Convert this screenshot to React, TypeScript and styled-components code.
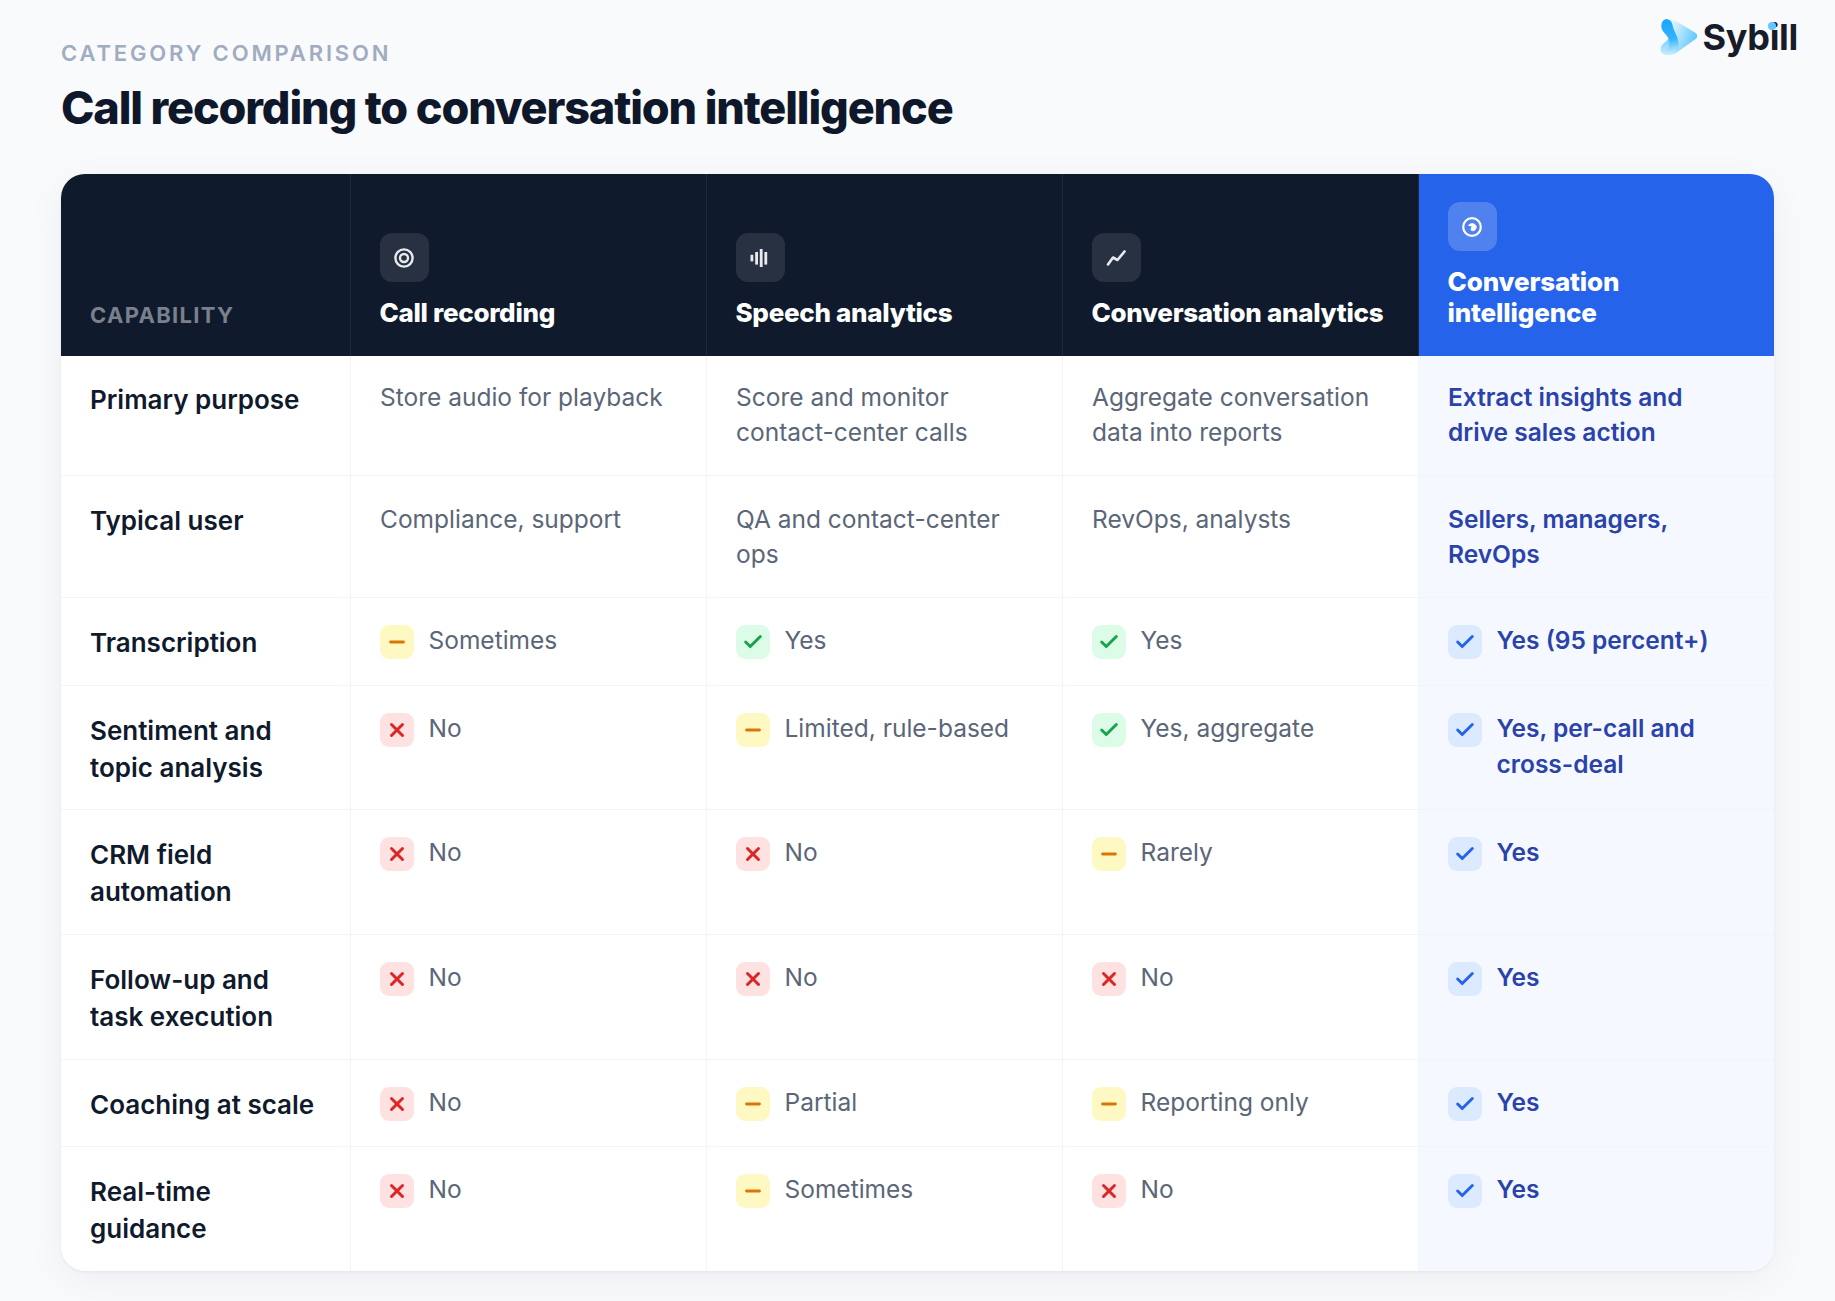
import React from 'react';
import styled, { createGlobalStyle } from 'styled-components';
import { Check, Minus, X } from 'lucide-react';

type Status = 'yes' | 'partial' | 'no' | 'best';

type Value = { status?: Status; text: string };

type Row = { label: string; labelTop: number; valueTop: number; values: Value[] };

const columns = ['Call recording', 'Speech analytics', 'Conversation analytics', 'Conversation intelligence'];

const rows: Row[] = [
  {
    label: 'Primary purpose',
    labelTop: 24.5,
    valueTop: 23.5,
    values: [
      { text: 'Store audio for playback' },
      { text: 'Score and monitor contact-center calls' },
      { text: 'Aggregate conversation data into reports' },
      { text: 'Extract insights and drive sales action' },
    ],
  },
  {
    label: 'Typical user',
    labelTop: 25.5,
    valueTop: 25.5,
    values: [
      { text: 'Compliance, support' },
      { text: 'QA and contact-center ops' },
      { text: 'RevOps, analysts' },
      { text: 'Sellers, managers, RevOps' },
    ],
  },
  {
    label: 'Transcription',
    labelTop: 25.5,
    valueTop: 25,
    values: [
      { status: 'partial', text: 'Sometimes' },
      { status: 'yes', text: 'Yes' },
      { status: 'yes', text: 'Yes' },
      { status: 'best', text: 'Yes (95 percent+)' },
    ],
  },
  {
    label: 'Sentiment and topic analysis',
    labelTop: 25.5,
    valueTop: 25,
    values: [
      { status: 'no', text: 'No' },
      { status: 'partial', text: 'Limited, rule-based' },
      { status: 'yes', text: 'Yes, aggregate' },
      { status: 'best', text: 'Yes, per-call and cross-deal' },
    ],
  },
  {
    label: 'CRM field automation',
    labelTop: 25.5,
    valueTop: 25,
    values: [
      { status: 'no', text: 'No' },
      { status: 'no', text: 'No' },
      { status: 'partial', text: 'Rarely' },
      { status: 'best', text: 'Yes' },
    ],
  },
  {
    label: 'Follow-up and task execution',
    labelTop: 25.5,
    valueTop: 25,
    values: [
      { status: 'no', text: 'No' },
      { status: 'no', text: 'No' },
      { status: 'no', text: 'No' },
      { status: 'best', text: 'Yes' },
    ],
  },
  {
    label: 'Coaching at scale',
    labelTop: 25.5,
    valueTop: 25,
    values: [
      { status: 'no', text: 'No' },
      { status: 'partial', text: 'Partial' },
      { status: 'partial', text: 'Reporting only' },
      { status: 'best', text: 'Yes' },
    ],
  },
  {
    label: 'Real-time guidance',
    labelTop: 25.5,
    valueTop: 25,
    values: [
      { status: 'no', text: 'No' },
      { status: 'partial', text: 'Sometimes' },
      { status: 'no', text: 'No' },
      { status: 'best', text: 'Yes' },
    ],
  },
];

const statusColors: Record<Status, { bg: string; fg: string }> = {
  yes: { bg: '#dcfce7', fg: '#16a34a' },
  partial: { bg: '#fef9c3', fg: '#d97706' },
  no: { bg: '#fee2e2', fg: '#dc2626' },
  best: { bg: '#dbeafe', fg: '#2563eb' },
};

const GlobalStyle = createGlobalStyle`
  html, body {
    margin: 0;
    padding: 0;
    background: #f9fafc;
  }

  body {
    font-family: Inter, "Noto Sans", sans-serif;
  }
`;

const Logo = () => (
  <LogoWrap>
    <svg width="38" height="38" viewBox="0 0 37 37" fill="none">
      <defs>
        <linearGradient id="logoBody" x1="10" y1="8" x2="36" y2="18" gradientUnits="userSpaceOnUse">
          <stop offset="0" stopColor="#e6f6ff" />
          <stop offset="1" stopColor="#62c7ff" />
        </linearGradient>
        <linearGradient id="logoLobe" x1="6" y1="22" x2="4" y2="36" gradientUnits="userSpaceOnUse">
          <stop offset="0" stopColor="#7fd2ff" />
          <stop offset="1" stopColor="#c9ecff" />
        </linearGradient>
        <linearGradient id="logoRibbon" x1="8" y1="1" x2="12" y2="36" gradientUnits="userSpaceOnUse">
          <stop offset="0" stopColor="#16a5fb" />
          <stop offset="0.55" stopColor="#34b3fd" />
          <stop offset="1" stopColor="#d5f0ff" />
        </linearGradient>
      </defs>
      <path d="M6 1 C10 0 13 2 17 4 L34 14 C37 16 37 19 34 21 L17 33 C12 36 8 36 6 36 L12 8 Z" fill="url(#logoBody)" />
      <path d="M8 20 C7 23 2 25 1 28 C0 31 1 34 3 35 C5 36 7 36 9 36 L12 26 Z" fill="url(#logoLobe)" />
      <path
        d="M6 1 C1 2 0 9 3 13 C6 17 9 19 9 24 C9 28 8 32 6 36 C12 36 17 33 18 28 C19 22 15 15 13 10 C12 6 12 2 6 1 Z"
        fill="url(#logoRibbon)"
      />
    </svg>
    <LogoWord>
      Sybill
      <LogoDot />
    </LogoWord>
  </LogoWrap>
);

const TargetIcon = () => (
  <svg width="24" height="24" viewBox="0 0 24 24" fill="none" stroke="#e8eaee" strokeWidth="2.4">
    <circle cx="12" cy="12" r="8.6" />
    <circle cx="12" cy="12" r="4" />
  </svg>
);

const BarsIcon = () => (
  <svg width="24" height="24" viewBox="0 0 24 24" fill="#e8eaee">
    <rect x="2.5" y="8.8" width="2.8" height="6.6" />
    <rect x="7.2" y="6" width="2.8" height="12.6" />
    <rect x="11.8" y="3" width="2.8" height="18" />
    <rect x="16.4" y="6" width="2.8" height="12.6" />
  </svg>
);

const TrendIcon = () => (
  <svg width="24" height="24" viewBox="0 0 24 24" fill="none" stroke="#e8eaee" strokeWidth="2.6" strokeLinecap="round" strokeLinejoin="round">
    <path d="M4 18.5 L9 11.5 L13.5 14 L20.5 5.5" />
  </svg>
);

const SwirlIcon = () => (
  <svg width="24" height="24" viewBox="0 0 24 24" fill="none" stroke="#ffffff" strokeWidth="2.2">
    <circle cx="12" cy="12" r="8.8" />
    <path d="M8.6 10.4 C10 7.8 16 8 16.2 12 C16.2 15.6 12.4 16.6 11 14.8 L12.2 11 Z" fill="#ffffff" strokeWidth="1" />
  </svg>
);

const headerIcons = [<TargetIcon />, <BarsIcon />, <TrendIcon />, <SwirlIcon />];

const StatusIcon = ({ status }: { status: Status }) => {
  const Icon = status === 'partial' ? Minus : status === 'no' ? X : Check;
  return (
    <StatusTile $status={status}>
      <Icon size={22} strokeWidth={3.2} />
    </StatusTile>
  );
};

export default function App() {
  return (
    <Page>
      <GlobalStyle />
      <TopBar>
        <Heading>
          <Eyebrow>CATEGORY COMPARISON</Eyebrow>
          <Title>Call recording to conversation intelligence</Title>
        </Heading>
        <Logo />
      </TopBar>
      <Card>
        <CapabilityHead>CAPABILITY</CapabilityHead>
        {columns.map((name, i) => (
          <ColumnHead key={name} $featured={i === 3}>
            <HeadTile $featured={i === 3}>{headerIcons[i]}</HeadTile>
            <HeadName $featured={i === 3}>{name}</HeadName>
          </ColumnHead>
        ))}
        {rows.map((row, r) => (
          <React.Fragment key={row.label}>
            <LabelCell $top={row.labelTop} $last={r === rows.length - 1}>
              {row.label}
            </LabelCell>
            {row.values.map((value, i) => (
              <ValueCell key={i} $featured={i === 3} $top={row.valueTop} $last={r === rows.length - 1}>
                {value.status && <StatusIcon status={value.status} />}
                <ValueText>{value.text}</ValueText>
              </ValueCell>
            ))}
          </React.Fragment>
        ))}
      </Card>
    </Page>
  );
}

const Page = styled.div`
  min-height: 1301px;
  box-sizing: border-box;
  padding-top: 17px;
  background: #f9fafc;
`;

const TopBar = styled.header`
  display: flex;
  justify-content: space-between;
  align-items: flex-start;
  padding: 0 37px 0 61px;
  height: 157px;
`;

const Heading = styled.div`
  display: flex;
  flex-direction: column;
  padding-top: 22px;
`;

const Eyebrow = styled.div`
  font-size: 22px;
  line-height: 28px;
  font-weight: 600;
  letter-spacing: 2.85px;
  color: #a0acc0;
`;

const Title = styled.h1`
  margin: 13px 0 0;
  font-size: 45px;
  line-height: 56px;
  font-weight: 800;
  letter-spacing: -1.14px;
  color: #0f172a;
`;

const LogoWrap = styled.div`
  display: flex;
  align-items: center;
  gap: 5px;
  height: 40px;
  margin-left: auto;
`;

const LogoWord = styled.div`
  position: relative;
  font-size: 36px;
  line-height: 40px;
  font-weight: 700;
  letter-spacing: -0.3px;
  color: #171c2b;
`;

const LogoDot = styled.span`
  position: absolute;
  left: 65px;
  top: 5px;
  width: 8px;
  height: 8px;
  border-radius: 50%;
  background: #62c6ff;
`;

const Card = styled.section`
  display: grid;
  grid-template-columns: 290px 356px 356px 356px 355px;
  grid-template-rows: 182px 120px 122px 88px 124px 125px 125px 87px 124px;
  width: 1713px;
  margin-left: 61px;
  border-radius: 24px;
  overflow: hidden;
  background: #ffffff;
  box-shadow: 0 1px 3px rgba(15, 23, 42, 0.06), 0 10px 40px rgba(15, 23, 42, 0.05);
`;

const CapabilityHead = styled.div`
  display: flex;
  align-items: flex-end;
  box-sizing: border-box;
  padding: 0 29px 26px;
  background: #101a2d;
  border-right: 1px solid rgba(255, 255, 255, 0.07);
  font-size: 22px;
  line-height: 30px;
  font-weight: 700;
  letter-spacing: 1.3px;
  color: #7a808c;
`;

const ColumnHead = styled.div<{ $featured: boolean }>`
  display: flex;
  flex-direction: column;
  justify-content: flex-end;
  box-sizing: border-box;
  padding: 0 28.5px 28px;
  background: ${(p) => (p.$featured ? '#2563eb' : '#101a2d')};
  border-right: ${(p) => (p.$featured ? '0' : '1px solid rgba(255, 255, 255, 0.07)')};
`;

const HeadTile = styled.div<{ $featured: boolean }>`
  display: flex;
  align-items: center;
  justify-content: center;
  width: 49px;
  height: 49px;
  margin-bottom: 15px;
  border-radius: 12px;
  background: ${(p) => (p.$featured ? 'rgba(255, 255, 255, 0.2)' : 'rgba(255, 255, 255, 0.1)')};
`;

const HeadName = styled.div<{ $featured: boolean }>`
  font-size: 26px;
  line-height: 31px;
  font-weight: 800;
  letter-spacing: ${(p) => (p.$featured ? '-0.15px' : '-0.3px')};
  color: #ffffff;
`;

const LabelCell = styled.div<{ $top: number; $last: boolean }>`
  box-sizing: border-box;
  padding: ${(p) => p.$top}px 29px 0;
  border-right: 1px solid #f1f5f9;
  border-bottom: ${(p) => (p.$last ? '0' : '1px solid #f1f5f9')};
  font-size: 26px;
  line-height: 37.4px;
  font-weight: 600;
  color: #101a2d;
`;

const ValueCell = styled.div<{ $featured: boolean; $top: number; $last: boolean }>`
  display: flex;
  align-items: flex-start;
  gap: 14.5px;
  box-sizing: border-box;
  padding: ${(p) => p.$top}px 29px 0;
  background: ${(p) => (p.$featured ? '#f5f8ff' : '#ffffff')};
  border-right: ${(p) => (p.$featured ? '0' : '1px solid #f1f5f9')};
  border-bottom: ${(p) => (p.$last ? '0' : '1px solid #f1f5f9')};
  font-size: 24.5px;
  line-height: 35.5px;
  font-weight: ${(p) => (p.$featured ? 600 : 400)};
  color: ${(p) => (p.$featured ? '#2a43ab' : '#5b6678')};
`;

const ValueText = styled.span`
  flex: 1;
`;

const StatusTile = styled.span<{ $status: Status }>`
  display: flex;
  flex: none;
  align-items: center;
  justify-content: center;
  width: 34px;
  height: 34px;
  margin-top: 2px;
  border-radius: 9px;
  background: ${(p) => statusColors[p.$status].bg};
  color: ${(p) => statusColors[p.$status].fg};
`;
